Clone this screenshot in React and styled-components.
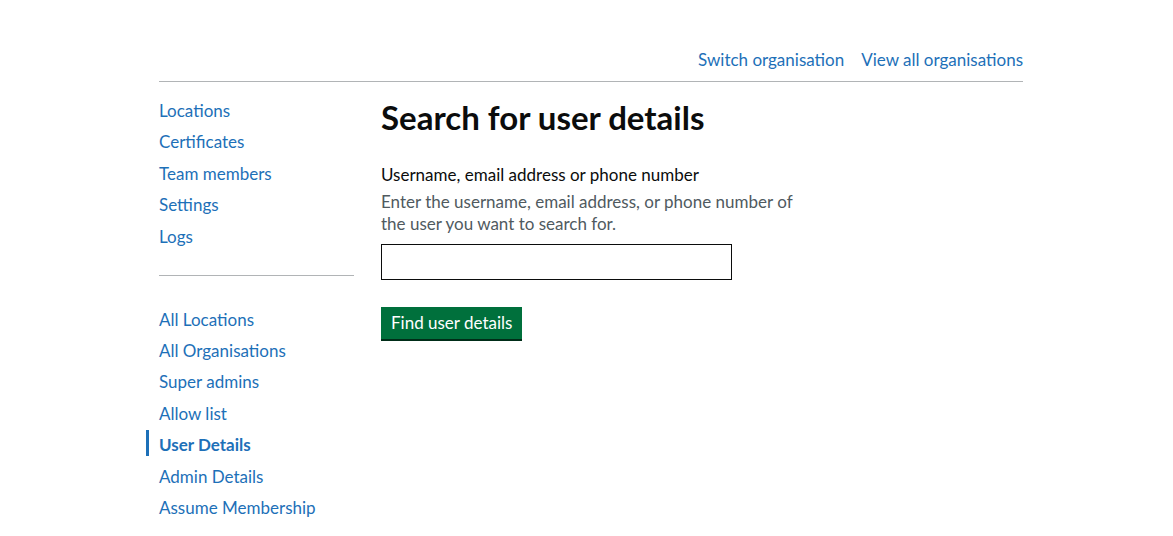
import React from 'react'
import styled, { createGlobalStyle } from 'styled-components'

const Global = createGlobalStyle`
  html, body {
    margin: 0;
    padding: 0;
    background: #fff;
  }
  body {
    font-family: Lato, "Noto Sans", Arial, sans-serif;
    color: #0b0c0c;
  }
`

const primaryNav = ['Locations', 'Certificates', 'Team members', 'Settings', 'Logs']
const adminNav = [
  'All Locations',
  'All Organisations',
  'Super admins',
  'Allow list',
  'User Details',
  'Admin Details',
  'Assume Membership',
]

export default () => {
  return (
    <>
      <Global />
      <Page>
        <Header>
          <TopLink href='#'>Switch organisation</TopLink>
          <TopLink href='#'>View all organisations</TopLink>
        </Header>
        <Columns>
          <Side>
            <NavList>
              {primaryNav.map(item => (
                <Item key={item}>
                  <NavLink href='#'>{item}</NavLink>
                </Item>
              ))}
            </NavList>
            <Divider />
            <NavList>
              {adminNav.map(item => (
                <Item key={item} active={item === 'User Details'}>
                  <NavLink href='#' active={item === 'User Details'}>{item}</NavLink>
                </Item>
              ))}
            </NavList>
          </Side>
          <Main>
            <H1>Search for user details</H1>
            <Label htmlFor='search'>Username, email address or phone number</Label>
            <Hint>Enter the username, email address, or phone number of the user you want to search for.</Hint>
            <Input id='search' type='text' />
            <Button type='submit'>Find user details</Button>
          </Main>
        </Columns>
      </Page>
    </>
  )
}

const Page = styled.div`
  width: 864px;
  margin-left: 159px;
  padding-top: 49px;
`

const Header = styled.div`
  display: flex;
  justify-content: flex-end;
  gap: 17px;
  padding-bottom: 10px;
  border-bottom: 1px solid #b1b4b6;
`

const TopLink = styled.a`
  color: #1d70b8;
  font-size: 17px;
  line-height: 22px;
  text-decoration: none;
`

const Columns = styled.div`
  display: flex;
  gap: 27px;
`

const Side = styled.nav`
  width: 195px;
  flex-shrink: 0;
  padding-top: 18px;
`

const NavList = styled.ul`
  list-style: none;
  margin: 0;
  padding: 0;
`

const Item = styled.li`
  position: relative;
  line-height: 22px;
  margin-bottom: 9.4px;

  &::before {
    content: '';
    display: ${({ active }) => (active ? 'block' : 'none')};
    position: absolute;
    left: -13px;
    top: -4px;
    width: 3px;
    height: 26px;
    background: #1d70b8;
  }
`

const NavLink = styled.a`
  color: #1d70b8;
  font-size: 17px;
  font-weight: ${({ active }) => (active ? 700 : 400)};
  text-decoration: none;
`

const Divider = styled.hr`
  border: none;
  border-top: 1px solid #b1b4b6;
  margin: 27px 0 33px;
`

const Main = styled.main`
  flex: 1;
  padding-top: 15px;
`

const H1 = styled.h1`
  font-size: 33px;
  line-height: 40px;
  font-weight: 700;
  margin: 0 0 27px;
`

const Label = styled.label`
  display: block;
  font-size: 17px;
  line-height: 22px;
  margin-bottom: 5px;
`

const Hint = styled.div`
  font-size: 17px;
  line-height: 22px;
  color: #505a5f;
  max-width: 415px;
  margin-bottom: 9px;
`

const Input = styled.input`
  display: block;
  box-sizing: border-box;
  width: 351px;
  height: 36px;
  border: 1px solid #0b0c0c;
  margin: 0 0 27px;
  padding: 4px;
  font-size: 17px;
  font-family: inherit;
`

const Button = styled.button`
  background: #00703c;
  color: #fff;
  border: none;
  box-shadow: 0 2px 0 #002d18;
  font-family: inherit;
  font-size: 17px;
  line-height: 22px;
  height: 32px;
  padding: 0 10px;
  cursor: pointer;
`
